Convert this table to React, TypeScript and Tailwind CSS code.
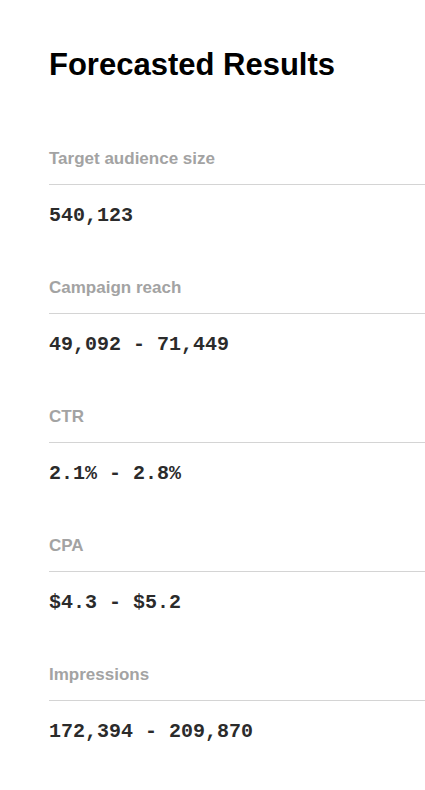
const results = [
  { label: "Target audience size", value: "540,123" },
  { label: "Campaign reach", value: "49,092 - 71,449" },
  { label: "CTR", value: "2.1% - 2.8%" },
  { label: "CPA", value: "$4.3 - $5.2" },
  { label: "Impressions", value: "172,394 - 209,870" },
];

export default function App() {
  return (
    <div className="min-h-[790px] w-[425px] bg-white pl-[49px] pt-[41px]">
      <h1 className="text-[31px] font-bold leading-[48px] text-black [font-family:'Liberation_Sans',Arial,sans-serif]">
        Forecasted Results
      </h1>

      <div className="mt-[58px] flex flex-col gap-[48px]">
        {results.map((r) => (
          <div key={r.label}>
            <div className="border-b border-[#d4d4d4] pb-[13px] text-[17px] font-bold leading-[24px] text-[#a3a3a3] [font-family:'Liberation_Sans',Arial,sans-serif]">
              {r.label}
            </div>
            <div className="mt-[19px] text-[20px] font-bold leading-[24px] text-[#2b2b2b] [font-family:'Liberation_Mono',monospace]">
              {r.value}
            </div>
          </div>
        ))}
      </div>
    </div>
  );
}
